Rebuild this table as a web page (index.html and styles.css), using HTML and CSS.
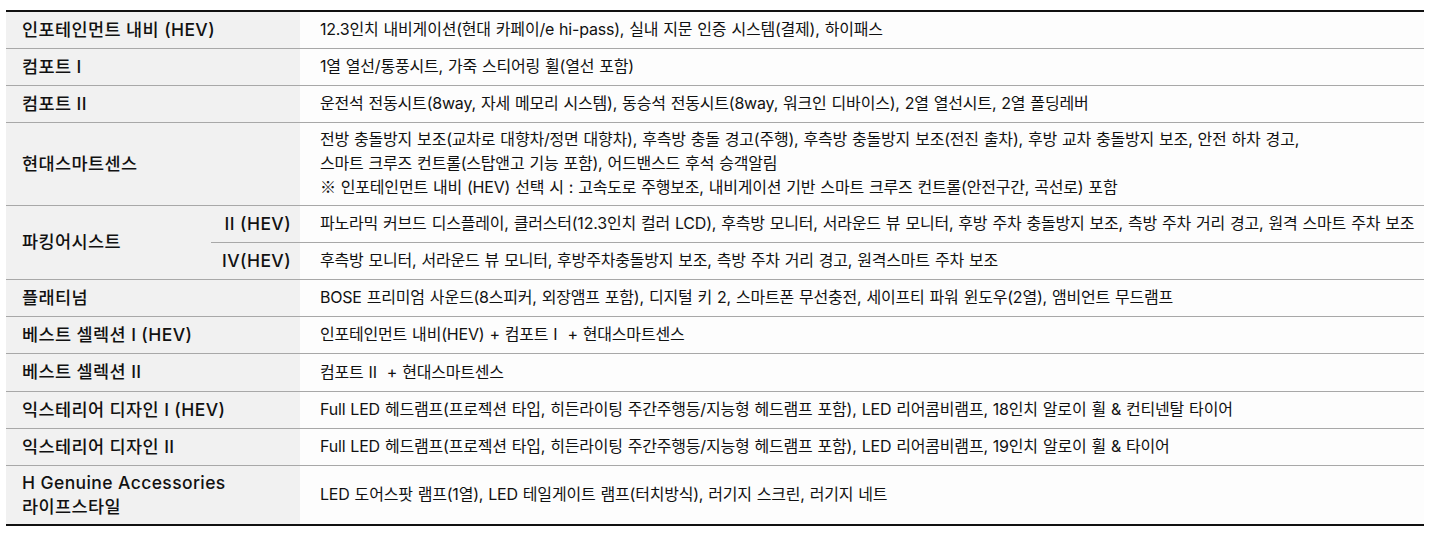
FILE: index.html
```html
<!DOCTYPE html>
<html lang="ko">
<head>
<meta charset="utf-8">
<link rel="stylesheet" href="styles.css">
</head>
<body>
<div class="wrap">
<table class="opts">
  <colgroup><col class="c-head"><col class="c-sub"><col class="c-body"></colgroup>
  <tbody>
    <tr><th colspan="2">인포테인먼트 내비 (HEV)</th><td>12.3인치 내비게이션(현대 카페이/e hi-pass), 실내 지문 인증 시스템(결제), 하이패스</td></tr>
    <tr><th colspan="2">컴포트 I</th><td>1열 열선/통풍시트, 가죽 스티어링 휠(열선 포함)</td></tr>
    <tr><th colspan="2">컴포트 II</th><td>운전석 전동시트(8way, 자세 메모리 시스템), 동승석 전동시트(8way, 워크인 디바이스), 2열 열선시트, 2열 폴딩레버</td></tr>
    <tr><th colspan="2">현대스마트센스</th><td>전방 충돌방지 보조(교차로 대향차/정면 대향차), 후측방 충돌 경고(주행), 후측방 충돌방지 보조(전진 출차), 후방 교차 충돌방지 보조, 안전 하차 경고,<br>스마트 크루즈 컨트롤(스탑앤고 기능 포함), 어드밴스드 후석 승객알림<br><span class="ref">※</span> 인포테인먼트 내비 (HEV) 선택 시 : 고속도로 주행보조, 내비게이션 기반 스마트 크루즈 컨트롤(안전구간, 곡선로) 포함</td></tr>
    <tr><th rowspan="2">파킹어시스트</th><th class="sub">II (HEV)</th><td>파노라믹 커브드 디스플레이, 클러스터(12.3인치 컬러 LCD), 후측방 모니터, 서라운드 뷰 모니터, 후방 주차 충돌방지 보조, 측방 주차 거리 경고, 원격 스마트 주차 보조</td></tr>
    <tr><th class="sub">IV(HEV)</th><td>후측방 모니터, 서라운드 뷰 모니터, 후방주차충돌방지 보조, 측방 주차 거리 경고, 원격스마트 주차 보조</td></tr>
    <tr><th colspan="2">플래티넘</th><td>BOSE 프리미엄 사운드(8스피커, 외장앰프 포함), 디지털 키 2, 스마트폰 무선충전, 세이프티 파워 윈도우(2열), 앰비언트 무드램프</td></tr>
    <tr><th colspan="2">베스트 셀렉션 I (HEV)</th><td>인포테인먼트 내비(HEV) + 컴포트 I &nbsp;+ 현대스마트센스</td></tr>
    <tr><th colspan="2">베스트 셀렉션 II</th><td>컴포트 II &nbsp;+ 현대스마트센스</td></tr>
    <tr><th colspan="2">익스테리어 디자인 I (HEV)</th><td>Full LED 헤드램프(프로젝션 타입, 히든라이팅 주간주행등/지능형 헤드램프 포함), LED 리어콤비램프, 18인치 알로이 휠 &amp; 컨티넨탈 타이어</td></tr>
    <tr><th colspan="2">익스테리어 디자인 II</th><td>Full LED 헤드램프(프로젝션 타입, 히든라이팅 주간주행등/지능형 헤드램프 포함), LED 리어콤비램프, 19인치 알로이 휠 &amp; 타이어</td></tr>
    <tr><th colspan="2">H Genuine Accessories<br>라이프스타일</th><td>LED 도어스팟 램프(1열), LED 테일게이트 램프(터치방식), 러기지 스크린, 러기지 네트</td></tr>
  </tbody>
</table>
</div>
</body>
</html>
```
FILE: styles.css
```css
html, body {
  margin: 0;
  padding: 0;
  background: #ffffff;
}
.wrap {
  padding: 10px 8px 0 6px;
}
.opts {
  width: 1418px;
  border-collapse: collapse;
  table-layout: fixed;
  border-top: 2px solid #111;
  border-bottom: 2px solid #111;
  font-family: "Inter", "Noto Sans CJK KR", sans-serif;
  color: #111;
}
.c-head { width: 205px; }
.c-sub { width: 89px; }
.c-body { width: auto; }
.opts tr {
  height: 37.2px;
}
.opts th, .opts td {
  border-top: 1px solid #a8a8a8;
  vertical-align: middle;
  padding: 5px 0;
}
.opts tr:first-child th, .opts tr:first-child td { border-top: none; }
.opts th {
  background: #f1f1f1;
  text-align: left;
  font-size: 17.5px;
  font-weight: 500;
  line-height: 24px;
  padding-left: 16px;
  letter-spacing: 0.4px;
}
.opts th.sub {
  text-align: right;
  padding-left: 0;
  padding-right: 9px;
}
.opts td {
  background: #fdfdfd;
  font-size: 16px;
  font-weight: 400;
  line-height: 23.5px;
  padding-left: 20px;
  letter-spacing: -0.2px;
  word-spacing: 0.7px;
}
.ref {
  font-family: "Noto Sans CJK KR", sans-serif;
}
```
